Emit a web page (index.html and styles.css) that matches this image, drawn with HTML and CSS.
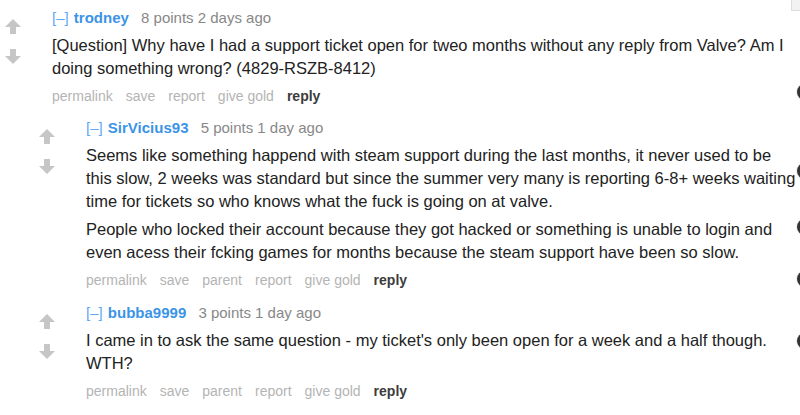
FILE: index.html
```html
<!doctype html>
<html lang="en">

<head>
  <meta charset="utf-8" />
  <meta name="viewport" content="width=device-width, initial-scale=1.0" />
  <link rel="stylesheet" href="styles.css">
</head>

<body>
  <div class="edge-box"></div>
  <div class="edge-dot" style="top: 84px"></div>
  <div class="edge-dot" style="top: 163px"></div>
  <div class="edge-dot" style="top: 219px"></div>
  <div class="edge-dot" style="top: 271px"></div>
  <div class="edge-dot" style="top: 333px"></div>

  <div class="thread">
    <div class="comment">
      <div class="votes">
        <svg class="arrow" viewBox="0 0 16 15"><polygon points="8,0 16,8 11,8 11,15 5,15 5,8 0,8" /></svg>
        <svg class="arrow" viewBox="0 0 16 15"><polygon points="5,0 11,0 11,7 16,7 8,15 0,7 5,7" /></svg>
      </div>
      <div class="entry">
        <div class="tagline">
          <a class="expand">[&ndash;]</a>
          <a class="author">trodney</a>
          <span class="score">8 points 2 days ago</span>
        </div>
        <div class="md">
          <p>[Question] Why have I had a support ticket open for tweo months without any reply from Valve? Am I doing something wrong? (4829-RSZB-8412)</p>
        </div>
        <ul class="buttons">
          <li>permalink</li>
          <li>save</li>
          <li>report</li>
          <li>give gold</li>
          <li class="reply">reply</li>
        </ul>
      </div>
    </div>

    <div class="child">
      <div class="comment">
        <div class="votes">
          <svg class="arrow" viewBox="0 0 16 15"><polygon points="8,0 16,8 11,8 11,15 5,15 5,8 0,8" /></svg>
          <svg class="arrow" viewBox="0 0 16 15"><polygon points="5,0 11,0 11,7 16,7 8,15 0,7 5,7" /></svg>
        </div>
        <div class="entry">
          <div class="tagline">
            <a class="expand">[&ndash;]</a>
            <a class="author">SirVicius93</a>
            <span class="score">5 points 1 day ago</span>
          </div>
          <div class="md">
            <p>Seems like something happend with steam support during the last months, it never used to be this slow, 2 weeks was standard but since the summer very many is reporting 6-8+ weeks waiting time for tickets so who knows what the fuck is going on at valve.</p>
            <p>People who locked their account because they got hacked or something is unable to login and even acess their fcking games for months because the steam support have been so slow.</p>
          </div>
          <ul class="buttons">
            <li>permalink</li>
            <li>save</li>
            <li>parent</li>
            <li>report</li>
            <li>give gold</li>
            <li class="reply">reply</li>
          </ul>
        </div>
      </div>

      <div class="comment">
        <div class="votes">
          <svg class="arrow" viewBox="0 0 16 15"><polygon points="8,0 16,8 11,8 11,15 5,15 5,8 0,8" /></svg>
          <svg class="arrow" viewBox="0 0 16 15"><polygon points="5,0 11,0 11,7 16,7 8,15 0,7 5,7" /></svg>
        </div>
        <div class="entry">
          <div class="tagline">
            <a class="expand">[&ndash;]</a>
            <a class="author">bubba9999</a>
            <span class="score">3 points 1 day ago</span>
          </div>
          <div class="md">
            <p>I came in to ask the same question - my ticket's only been open for a week and a half though. WTH?</p>
          </div>
          <ul class="buttons">
            <li>permalink</li>
            <li>save</li>
            <li>parent</li>
            <li>report</li>
            <li>give gold</li>
            <li class="reply">reply</li>
          </ul>
        </div>
      </div>
    </div>
  </div>
</body>

</html>
```

FILE: styles.css
```css
body {
  margin: 0;
  background: #fff;
  font-family: "Liberation Sans", Arial, sans-serif;
  font-size: 14px;
  color: #222;
  overflow: hidden;
  position: relative;
  height: 415px;
}

.thread {
  width: 800px;
  padding-top: 8px;
}

.comment {
  display: flex;
  margin-bottom: 12px;
}

.child {
  margin-left: 34px;
}

.child .comment {
  margin-bottom: 13px;
}

.votes {
  width: 42px;
  padding-left: 5px;
  padding-top: 11px;
  display: flex;
  flex-direction: column;
  gap: 15px;
  flex-shrink: 0;
}

.arrow {
  width: 16px;
  height: 15px;
  fill: #c6c6c6;
}

.entry {
  flex: 1;
  padding-left: 5px;
  min-width: 0;
}

.tagline {
  font-size: 15px;
  line-height: 20px;
  color: #888;
}

.expand {
  color: #5fa8f5;
  margin-right: 1px;
}

.author {
  color: #3b94e6;
  font-weight: bold;
  margin-right: 8px;
}

.md p {
  font-size: 16.5px;
  margin: 6px 0 0;
  line-height: 23px;
}

.md p + p {
  margin-top: 5px;
}

.buttons {
  list-style: none;
  margin: 6px 0 0;
  padding: 0;
  display: flex;
  gap: 13px;
  line-height: 20px;
  color: #b4b4b4;
}

.buttons .reply {
  color: #3c3c3c;
  font-weight: bold;
}

.edge-box {
  position: absolute;
  top: 0;
  left: 791px;
  width: 9px;
  height: 10px;
  background: #f2f2f2;
  border-left: 1px solid #ddd;
  border-bottom: 1px solid #ddd;
}

.edge-dot {
  position: absolute;
  left: 797px;
  width: 16px;
  height: 16px;
  border-radius: 50%;
  background: #333;
  box-shadow: 0 0 0 1px #eee;
}
```
